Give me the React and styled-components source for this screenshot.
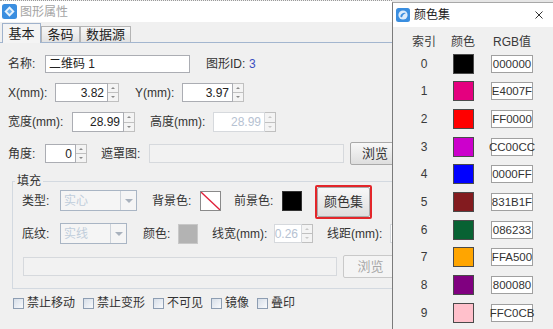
import React from 'react';
import styled, { createGlobalStyle } from 'styled-components';

const GlobalStyle = createGlobalStyle`
  html, body {
    margin: 0;
    padding: 0;
    background: #f0f0f0;
    overflow: hidden;
  }
  body {
    font-family: "Liberation Sans", "Noto Sans CJK SC", sans-serif;
    font-size: 12px;
    line-height: 16px;
    color: #333;
  }
`;

const Desktop = styled.div`
  display: flex;
  align-items: flex-start;
  width: 553px;
  height: 329px;
  overflow: hidden;
  background: #e6e6e6;
`;

const MainWindow = styled.div`
  width: 392px;
  height: 329px;
  flex-shrink: 0;
  overflow: hidden;
  box-sizing: border-box;
  background: #f0f0f0;
  border-top: 1px dotted #9a9a9a;
`;

const TitleBar = styled.div`
  height: ${p => p.$h}px;
  display: flex;
  align-items: center;
  gap: ${p => p.$gap}px;
  padding-left: ${p => p.$pl}px;
  background: #fff;
  color: ${p => (p.$active ? '#222' : '#a4a4a4')};
`;

const CloseX = styled.svg`
  margin-left: auto;
  margin-right: 10px;
`;

const TabStrip = styled.div`
  height: 20px;
  display: flex;
  align-items: flex-end;
  padding-left: 2px;
  border-bottom: 1px solid #a3b6cf;
`;

const Tab = styled.div`
  width: ${p => p.$w}px;
  height: ${p => (p.$active ? 20 : 16)}px;
  margin-bottom: ${p => (p.$active ? -1 : 0)}px;
  box-sizing: border-box;
  border: 1px solid ${p => (p.$active ? '#9fb2cc' : '#b4b4b4')};
  border-bottom: none;
  background: ${p => (p.$active ? '#f4f4f4' : 'linear-gradient(#f7f7f7, #e2e2e2)')};
  display: flex;
  align-items: center;
  justify-content: center;
  font-size: 13px;
  color: #222;
`;

const Content = styled.div`
  padding-left: 8px;
`;

const Row = styled.div`
  display: flex;
  align-items: center;
  height: ${p => p.$h}px;
  margin-top: ${p => p.$mt}px;
  white-space: nowrap;
`;

const Label = styled.span`
  width: ${p => p.$w}px;
  margin-left: ${p => p.$ml || 0}px;
  flex-shrink: 0;
  color: #333;
`;

const IdValue = styled.span`
  margin-left: 4px;
  color: #3a4fc0;
`;

const TextBox = styled.div`
  width: ${p => p.$w}px;
  height: ${p => p.$h || 18}px;
  margin-left: ${p => p.$ml || 0}px;
  flex-shrink: 0;
  box-sizing: border-box;
  display: flex;
  align-items: center;
  justify-content: ${p => (p.$right ? 'flex-end' : 'flex-start')};
  padding: 0 3px;
  border: 1px solid ${p => (p.$disabled ? '#d6d9dd' : '#abadb3')};
  background: ${p => p.$bg || '#fff'};
  color: ${p => (p.$disabled ? '#b6c2d2' : '#222')};
  font-size: 12px;
`;

const Spin = styled.div`
  display: flex;
  height: ${p => p.$h}px;
  margin-left: ${p => p.$ml || 0}px;
  flex-shrink: 0;
`;

const SpinButtons = styled.div`
  width: 11px;
  display: flex;
  flex-direction: column;
`;

const SpinBtn = styled.div`
  flex: 1;
  box-sizing: border-box;
  border: 1px solid #c0c0c0;
  border-left: none;
  border-top: ${p => (p.$down ? 'none' : '1px solid #c0c0c0')};
  background: #f4f4f4;
  display: flex;
  align-items: center;
  justify-content: center;

  &::after {
    content: '';
    border-left: 2px solid transparent;
    border-right: 2px solid transparent;
    border-${p => (p.$down ? 'top' : 'bottom')}: 2px solid ${p => (p.$disabled ? '#c8c8c8' : '#8a8a8a')};
  }
`;

const Button = styled.div`
  width: ${p => p.$w}px;
  height: ${p => p.$h}px;
  margin-left: ${p => p.$ml || 0}px;
  flex-shrink: 0;
  box-sizing: border-box;
  border: 1px solid ${p => (p.$disabled ? '#c9c9c9' : '#a9a9a9')};
  border-radius: 2px;
  background: ${p => (p.$disabled ? '#f4f4f4' : 'linear-gradient(#f8f8f8, #dedede)')};
  color: ${p => (p.$disabled ? '#a8a8a8' : '#333')};
  display: flex;
  align-items: center;
  justify-content: center;
  font-size: 13px;
`;

const Highlight = styled.div`
  margin-left: ${p => p.$ml}px;
  margin-top: 3px;
  flex-shrink: 0;
  border: 2px solid #e3262a;
  border-radius: 2px;
`;

const Group = styled.fieldset`
  width: 400px;
  min-width: 0;
  margin: 8px 0 0 4px;
  padding: 0;
  box-sizing: border-box;
  border: 1px solid #d3d9e0;
`;

const Legend = styled.legend`
  margin-left: 2px;
  padding: 0 2px;
  line-height: 16px;
  color: #333;
`;

const GroupBody = styled.div`
  padding: 1px 0 10px 9px;
`;

const Combo = styled.div`
  width: ${p => p.$w}px;
  height: 21px;
  flex-shrink: 0;
  box-sizing: border-box;
  display: flex;
  border: 1px solid #a9b5c4;
  background: #f5f5f5;
`;

const ComboText = styled.span`
  flex: 1;
  padding-left: 3px;
  display: flex;
  align-items: center;
  color: #c0cddb;
`;

const ComboArrow = styled.span`
  width: 15px;
  border-left: 1px solid #cdd3da;
  display: flex;
  align-items: center;
  justify-content: center;

  &::after {
    content: '';
    border-left: 4px solid transparent;
    border-right: 4px solid transparent;
    border-top: 4px solid #a9b2bd;
  }
`;

const Swatch = styled.div`
  width: ${p => p.$w || 21}px;
  height: 20px;
  flex-shrink: 0;
  box-sizing: border-box;
  border: 1px solid ${p => p.$border || '#555'};
  background: ${p => p.$color};
  display: flex;
`;

const CheckRow = styled.div`
  display: flex;
  align-items: center;
  height: 14px;
  margin: 7px 0 0 5px;
  white-space: nowrap;
`;

const CheckItem = styled.label`
  display: flex;
  align-items: center;
  gap: 3px;
  margin-right: 8px;
  color: #333;
`;

const CheckBox = styled.span`
  width: 9px;
  height: 9px;
  border: 1px solid #8d9db2;
  background: linear-gradient(135deg, #d6dee8, #f9fafc);
`;

const Popup = styled.div`
  width: 161px;
  height: 327px;
  margin-top: 2px;
  flex-shrink: 0;
  box-sizing: border-box;
  background: #f0f0f0;
  border-left: 1px solid #7b7b7b;
  border-top: 1px solid #a8a8a8;
`;

const ColorTable = styled.div`
  display: grid;
  grid-template-columns: 38px 40px 58px;
  grid-template-rows: 16px repeat(10, 27.67px);
  padding: 7px 0 0 12px;
`;

const Cell = styled.div`
  display: flex;
  align-items: center;
  justify-content: center;
  white-space: nowrap;
  color: #3a3a3a;
`;

const RgbBox = styled.div`
  width: 42px;
  height: 18px;
  box-sizing: border-box;
  border: 1px solid #a0a0a0;
  background: #fff;
  display: flex;
  align-items: center;
  justify-content: center;
  color: #333;
  font-size: 11.5px;
`;

const AppIcon = ({ size }) => (
  <svg width={size} height={size} viewBox="0 0 15 15">
    <rect width="15" height="15" rx="2.5" fill="#3a8ee0" />
    <path d="M7.5 2.2 12.6 7.5 7.5 12.8 2.4 7.5Z" fill="#e8f3fd" />
    <path d="M7.5 5 10 7.5 7.5 10 5 7.5Z" fill="#6db1ee" />
  </svg>
);

const SetIcon = () => (
  <svg width="14" height="14" viewBox="0 0 14 14">
    <rect width="14" height="14" rx="2.5" fill="#3a8ee0" />
    <circle cx="7" cy="7" r="4.6" fill="#dcecfb" />
    <path d="M4.2 8.6C5 5.4 8 4.2 9.8 5.2 8.2 5.6 6.6 6.8 6 9.6Z" fill="#3a8ee0" />
  </svg>
);

const SpinBox = ({ w, h, value, disabled, ml, bg }) => (
  <Spin $h={h} $ml={ml}>
    <TextBox $w={w} $h={h} $right $disabled={disabled} $bg={bg}>{value}</TextBox>
    <SpinButtons>
      <SpinBtn $disabled={disabled} />
      <SpinBtn $down $disabled={disabled} />
    </SpinButtons>
  </Spin>
);

const palette = [
  ['#000000', '000000'],
  ['#E4007F', 'E4007F'],
  ['#FF0000', 'FF0000'],
  ['#CC00CC', 'CC00CC'],
  ['#0000FF', '0000FF'],
  ['#831B1F', '831B1F'],
  ['#086233', '086233'],
  ['#FFA500', 'FFA500'],
  ['#800080', '800080'],
  ['#FFC0CB', 'FFC0CB'],
];

const checks = ['禁止移动', '禁止变形', '不可见', '镜像', '叠印'];

export default function App() {
  return (
    <>
      <GlobalStyle />
      <Desktop>
        <MainWindow>
          <TitleBar $h={21} $pl={2} $gap={3}>
            <AppIcon size={15} />
            <span>图形属性</span>
          </TitleBar>
          <TabStrip>
            <Tab $w={39} $active>基本</Tab>
            <Tab $w={39}>条码</Tab>
            <Tab $w={51}>数据源</Tab>
          </TabStrip>
          <Content>
            <Row $h={18} $mt={12}>
              <Label $w={37}>名称:</Label>
              <TextBox $w={145}>二维码 1</TextBox>
              <Label $w={39} $ml={16}>图形ID:</Label>
              <IdValue>3</IdValue>
            </Row>
            <Row $h={19} $mt={10}>
              <Label $w={47}>X(mm):</Label>
              <SpinBox w={53} h={19} value="3.82" />
              <Label $w={47} $ml={16}>Y(mm):</Label>
              <SpinBox w={51} h={19} value="3.97" />
            </Row>
            <Row $h={20} $mt={10}>
              <Label $w={64}>宽度(mm):</Label>
              <SpinBox w={52} h={20} value="28.99" />
              <Label $w={63} $ml={15}>高度(mm):</Label>
              <SpinBox w={52} h={20} value="28.99" disabled />
            </Row>
            <Row $h={23} $mt={10}>
              <Label $w={37}>角度:</Label>
              <SpinBox w={31} h={19} value="0" />
              <Label $w={48} $ml={14}>遮罩图:</Label>
              <TextBox $w={195} $h={19} $disabled $bg="#f2f2f2" />
              <Button $w={50} $h={23} $ml={6}>浏览</Button>
            </Row>
            <Group>
              <Legend>填充</Legend>
              <GroupBody>
                <Row $h={21} $mt={0}>
                  <Label $w={38}>类型:</Label>
                  <Combo $w={77}>
                    <ComboText>实心</ComboText>
                    <ComboArrow />
                  </Combo>
                  <Label $w={48} $ml={15}>背景色:</Label>
                  <Swatch $color="#fff" $border="#8a8a8a">
                    <svg width="19" height="18" viewBox="0 0 19 18">
                      <line x1="0" y1="0" x2="19" y2="18" stroke="#e0203a" strokeWidth="1.3" />
                    </svg>
                  </Swatch>
                  <Label $w={48} $ml={13}>前景色:</Label>
                  <Swatch $w={20} $color="#000" $border="#333" />
                  <Highlight $ml={13}>
                    <Button $w={53} $h={30}>颜色集</Button>
                  </Highlight>
                </Row>
                <Row $h={21} $mt={12}>
                  <Label $w={38}>底纹:</Label>
                  <Combo $w={67}>
                    <ComboText>实线</ComboText>
                    <ComboArrow />
                  </Combo>
                  <Label $w={35} $ml={16}>颜色:</Label>
                  <Swatch $w={20} $color="#b3b3b3" $border="#c8c8c8" />
                  <Label $w={62} $ml={14}>线宽(mm):</Label>
                  <SpinBox w={28} h={19} value="0.26" disabled />
                  <Label $w={63} $ml={14}>线距(mm):</Label>
                  <SpinBox w={40} h={19} value="" disabled />
                </Row>
                <Row $h={23} $mt={11}>
                  <TextBox $w={314} $h={19} $ml={1} $disabled $bg="#f2f2f2" />
                  <Button $w={55} $h={23} $ml={6} $disabled>浏览</Button>
                </Row>
              </GroupBody>
            </Group>
            <CheckRow>
              {checks.map(c => (
                <CheckItem key={c}>
                  <CheckBox />
                  {c}
                </CheckItem>
              ))}
            </CheckRow>
          </Content>
        </MainWindow>
        <Popup>
          <TitleBar $h={24} $pl={3} $gap={4} $active>
            <SetIcon />
            <span>颜色集</span>
            <CloseX width="8" height="8" viewBox="0 0 8 8">
              <path d="M0.5 0.5 7.5 7.5M7.5 0.5 0.5 7.5" stroke="#333" strokeWidth="1" />
            </CloseX>
          </TitleBar>
          <ColorTable>
            <Cell>索引</Cell>
            <Cell>颜色</Cell>
            <Cell>RGB值</Cell>
            {palette.map(([color, hex], i) => (
              <React.Fragment key={hex}>
                <Cell>{i}</Cell>
                <Cell><Swatch $color={color} $border="#4a4a4a" /></Cell>
                <Cell><RgbBox>{hex}</RgbBox></Cell>
              </React.Fragment>
            ))}
          </ColorTable>
        </Popup>
      </Desktop>
    </>
  );
}
